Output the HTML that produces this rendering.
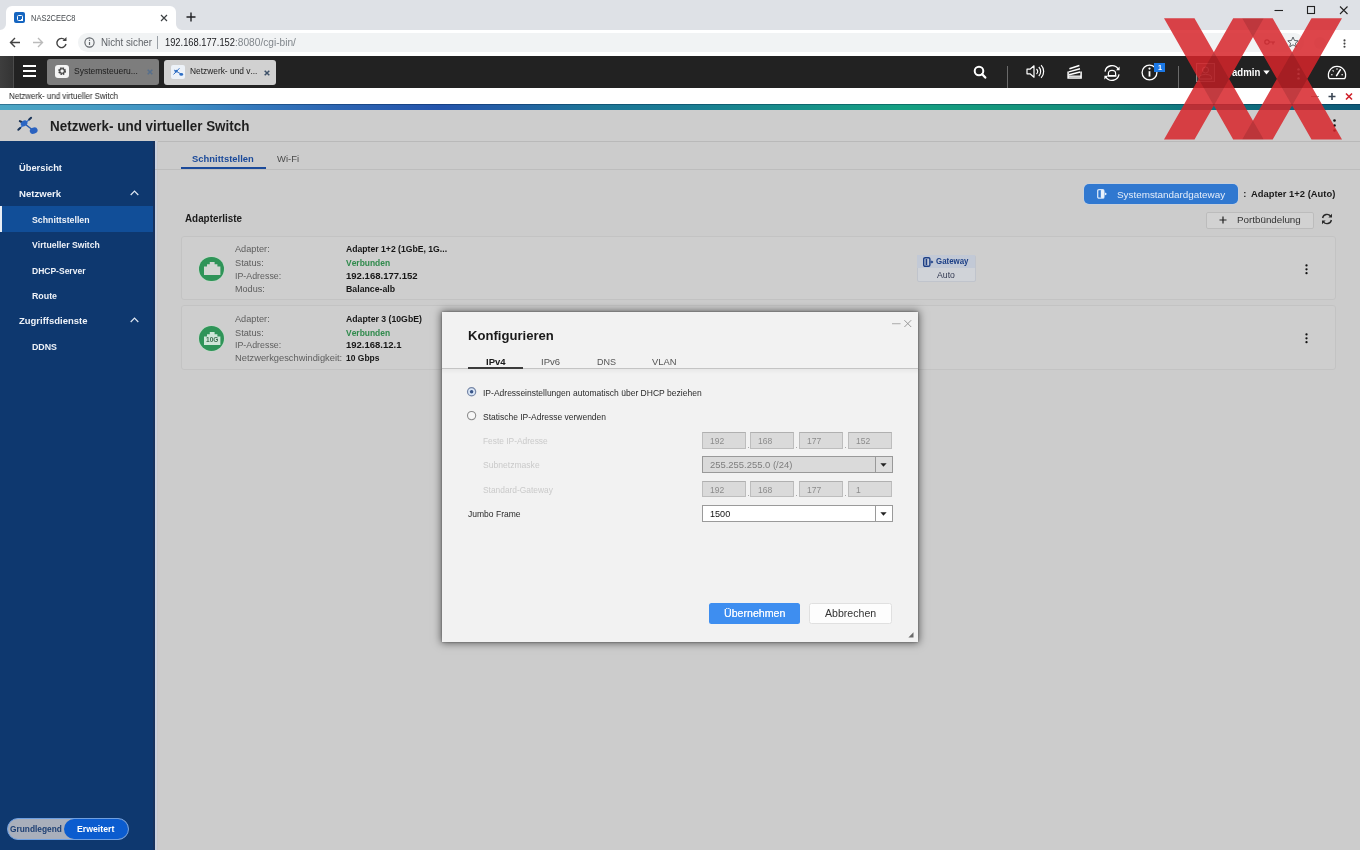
<!DOCTYPE html>
<html lang="de"><head><meta charset="utf-8"><title>NAS2CEEC8</title>
<style>
*{box-sizing:border-box;margin:0;padding:0}
html,body{width:1360px;height:850px;overflow:hidden;background:#cccccc;font-family:"Liberation Sans",sans-serif}
.a{position:absolute}
.t{position:absolute;white-space:nowrap;font-variant-ligatures:none;font-kerning:none;transform-origin:0 50%;line-height:20px;height:20px;font-family:"Liberation Sans",sans-serif}
svg{position:absolute;overflow:visible}
#root{position:absolute;left:0;top:0;width:1360px;height:850px;overflow:hidden;will-change:transform}
</style></head>
<body>
<div id="root">
<div class="a" style="left:0;top:0;width:1360px;height:30px;background:#dee1e6"></div>
<div class="a" style="left:5.5px;top:6px;width:170px;height:25px;background:#fff;border-radius:6px 6px 0 0"></div>
<svg style="left:-0.5px;top:23.5px" width="6" height="6" viewBox="0 0 6 6"><path d="M6 0V6H0A6 6 0 0 0 6 0Z" fill="#fff"/></svg>
<svg style="left:175.5px;top:23.5px" width="6" height="6" viewBox="0 0 6 6"><path d="M0 0V6H6A6 6 0 0 1 0 0Z" fill="#fff"/></svg>
<div class="a" style="left:14px;top:12px;width:11px;height:11px;background:#1565c0;border-radius:2px"></div>
<div class="a" style="left:16.5px;top:14.5px;width:6px;height:6px;border:1.3px solid #fff;border-radius:1.5px"></div>
<div class="a" style="left:21.2px;top:19.2px;width:2.2px;height:2.2px;background:#fff"></div>
<span class="t" style="left:31.20px;top:8.00px;font-size:9.20px;color:#45494d;transform:scaleX(0.815);">NAS2CEEC8</span>
<svg style="left:160px;top:14px" width="8" height="8" viewBox="0 0 8 8"><path d="M1 1L7 7M7 1L1 7" stroke="#3c4043" stroke-width="1.2" fill="none"/></svg>
<svg style="left:186px;top:12px" width="10" height="10" viewBox="0 0 10 10"><path d="M5 0.5V9.5M0.5 5H9.5" stroke="#202124" stroke-width="1.4" fill="none"/></svg>
<svg style="left:1274px;top:5px" width="80" height="12" viewBox="0 0 80 12"><path d="M0.5 5.5H9" stroke="#222" stroke-width="1.1" fill="none"/><rect x="33.5" y="1.5" width="7" height="7" stroke="#222" stroke-width="1.1" fill="none"/><path d="M66 1.5L73.5 9M73.5 1.5L66 9" stroke="#222" stroke-width="1.1" fill="none"/></svg>
<div class="a" style="left:0;top:29.5px;width:1360px;height:26px;background:#fff"></div>
<div class="a" style="left:78px;top:33.3px;width:1226px;height:18.6px;background:#f1f3f4;border-radius:9.3px"></div>
<svg style="left:9px;top:36px" width="60" height="13" viewBox="0 0 60 13"><path d="M11 6.5H1.5M6 2L1.5 6.5L6 11" stroke="#444" stroke-width="1.4" fill="none"/><path d="M24 6.5H33.5M29 2L33.5 6.5L29 11" stroke="#bbb" stroke-width="1.4" fill="none"/><path d="M56 4A4.6 4.6 0 1 0 57 8" stroke="#444" stroke-width="1.4" fill="none"/><path d="M57.5 1V5H53.5Z" fill="#444"/></svg>
<svg style="left:84px;top:37px" width="11" height="11" viewBox="0 0 11 11"><circle cx="5.5" cy="5.5" r="4.6" stroke="#5f6368" stroke-width="1.1" fill="none"/><path d="M5.5 5V8" stroke="#5f6368" stroke-width="1.2"/><circle cx="5.5" cy="3.3" r="0.7" fill="#5f6368"/></svg>
<span class="t" style="left:100.80px;top:32.00px;font-size:10.50px;color:#5f6368;transform:scaleX(0.930);">Nicht sicher</span>
<div class="a" style="left:157px;top:36px;width:1px;height:13px;background:#9aa0a6"></div>
<span class="t" style="left:165.00px;top:33.00px;font-size:10.03px;color:#202124;transform:scaleX(0.930);">192.168.177.152</span>
<span class="t" style="left:235.30px;top:32.00px;font-size:10.92px;color:#80868b;transform:scaleX(0.930);">:8080/cgi-bin/</span>
<svg style="left:1264px;top:37px" width="12" height="10" viewBox="0 0 12 10"><circle cx="3" cy="5" r="2.2" stroke="#5f6368" stroke-width="1.2" fill="none"/><path d="M5 5H11M9 5V7.5" stroke="#5f6368" stroke-width="1.2" fill="none"/></svg>
<svg style="left:1287px;top:36px" width="12" height="12" viewBox="0 0 12 12"><path d="M6 1L7.5 4.5L11.2 4.8L8.4 7.2L9.3 10.8L6 8.8L2.7 10.8L3.6 7.2L0.8 4.8L4.5 4.5Z" stroke="#5f6368" stroke-width="1" fill="none"/></svg>
<div class="a" style="left:1314px;top:36.5px;width:12px;height:12px;border-radius:6px;background:#eceef0"></div>
<svg style="left:1343.3px;top:38.6px" width="3" height="10" viewBox="0 0 3 10"><circle cx="1.5" cy="1.4" r="1.05" fill="#444"/><circle cx="1.5" cy="4.6" r="1.05" fill="#444"/><circle cx="1.5" cy="7.8" r="1.05" fill="#444"/></svg>
<div class="a" style="left:0;top:55.5px;width:1360px;height:32.5px;background:#222222"></div>
<div class="a" style="left:0;top:55.5px;width:13.7px;height:32.5px;background:linear-gradient(90deg,#3e3e3e,#343434);border-right:1px solid #4c4c4c"></div>
<div class="a" style="left:22.5px;top:64.5px;width:13.5px;height:2px;background:#fff"></div>
<div class="a" style="left:22.5px;top:69.5px;width:13.5px;height:2px;background:#fff"></div>
<div class="a" style="left:22.5px;top:74.5px;width:13.5px;height:2px;background:#fff"></div>
<div class="a" style="left:47.3px;top:59.4px;width:112px;height:25.5px;background:#7d7d7d;border-radius:3px"></div>
<div class="a" style="left:55px;top:64.5px;width:13.5px;height:13.5px;background:#f4f4f4;border-radius:3px"></div>
<svg style="left:56.6px;top:66.1px" width="10.2" height="10.2" viewBox="0 0 10 10"><circle cx="5" cy="5" r="3" stroke="#444" stroke-width="1.6" fill="none" stroke-dasharray="1.6 0.75"/><circle cx="5" cy="5" r="2.2" stroke="#444" stroke-width="1" fill="none"/></svg>
<span class="t" style="left:73.70px;top:61.00px;font-size:8.77px;color:#1c1c1c;transform:scaleX(0.970);">Systemsteueru...</span>
<svg style="left:147px;top:69px" width="6" height="6" viewBox="0 0 6 6"><path d="M0.7 0.7L5.3 5.3M5.3 0.7L0.7 5.3" stroke="#566f8c" stroke-width="1.5" fill="none"/></svg>
<div class="a" style="left:164px;top:59.5px;width:111.5px;height:25.5px;background:#d1d1d1;border-radius:3px"></div>
<div class="a" style="left:171px;top:64.5px;width:14px;height:14px;background:#edf2f8;border-radius:2px"></div>
<svg style="left:172px;top:66px" width="12" height="11" viewBox="0 0 12 11"><path d="M1.5 8.5L7.5 2.2M2 4L9 8" stroke="#3a74c6" stroke-width="1" fill="none"/><ellipse cx="4.2" cy="5.2" rx="1.7" ry="1.3" fill="#2f6fc4" transform="rotate(-35 4.2 5.2)"/><ellipse cx="9.3" cy="8.4" rx="1.9" ry="1.4" fill="#2f6fc4"/></svg>
<span class="t" style="left:189.80px;top:61.00px;font-size:8.65px;color:#1c1c1c;transform:scaleX(0.970);">Netzwerk- und v...</span>
<svg style="left:263.5px;top:69.5px" width="6" height="6" viewBox="0 0 6 6"><path d="M0.7 0.7L5.3 5.3M5.3 0.7L0.7 5.3" stroke="#3c5068" stroke-width="1.5" fill="none"/></svg>
<svg style="left:972.5px;top:64.6px" width="14" height="14" viewBox="0 0 14 14"><circle cx="6" cy="6" r="4.3" stroke="#fff" stroke-width="2" fill="none"/><path d="M9.2 9.2L12.3 12.6" stroke="#fff" stroke-width="2.3" stroke-linecap="round"/></svg>
<div class="a" style="left:1007px;top:66px;width:1px;height:23px;background:#6a6a6a"></div>
<svg style="left:1026px;top:64px" width="19" height="15" viewBox="0 0 19 15"><path d="M1 5.2H4L8 1.8V13.2L4 9.8H1Z" stroke="#fff" stroke-width="1.2" fill="none" stroke-linejoin="round"/><path d="M10.5 5A3.6 3.6 0 0 1 10.5 10" stroke="#fff" stroke-width="1.2" fill="none"/><path d="M12.8 3A6.4 6.4 0 0 1 12.8 12" stroke="#fff" stroke-width="1.2" fill="none"/><path d="M15.1 1.2A9 9 0 0 1 15.1 13.8" stroke="#fff" stroke-width="1.2" fill="none"/></svg>
<svg style="left:1066.5px;top:64px" width="15" height="16" viewBox="0 0 15 16"><path d="M2.4 4.8L12.4 1.5M1.8 7.9L13 4.8M2 10.8L13.2 8" stroke="#fff" stroke-width="1.5" fill="none"/><path d="M1.1 7.6V14H14.1V7.6" stroke="#fff" stroke-width="1.5" fill="none"/><path d="M1.1 12.2H14.1" stroke="#fff" stroke-width="1.3"/></svg>
<svg style="left:1102.5px;top:63.5px" width="18" height="18" viewBox="0 0 18 18"><path d="M2 7.6A7.2 7.2 0 0 1 15.2 5" stroke="#fff" stroke-width="1.3" fill="none"/><path d="M16 10.4A7.2 7.2 0 0 1 2.8 13" stroke="#fff" stroke-width="1.3" fill="none"/><path d="M16.6 2.6V6.2H13Z" fill="#fff"/><path d="M1.4 15.4V11.8H5Z" fill="#fff"/><path d="M5.4 11.6V9.4Q5.4 6.4 9 6.4Q12.6 6.4 12.6 9.4V11.6Z" stroke="#fff" stroke-width="1.2" fill="none"/><path d="M4.6 12H13.4" stroke="#fff" stroke-width="1.4"/></svg>
<svg style="left:1141px;top:64px" width="17" height="17" viewBox="0 0 17 17"><circle cx="8.5" cy="8.5" r="7.4" stroke="#fff" stroke-width="1.3" fill="none"/><path d="M8.5 7.2V12.6" stroke="#fff" stroke-width="1.8"/><circle cx="8.5" cy="4.6" r="1.1" fill="#fff"/></svg>
<div class="a" style="left:1154.2px;top:63.2px;width:10.5px;height:9.2px;background:#1b78e6"></div>
<span class="t" style="left:1157.60px;top:58.00px;font-size:7.48px;font-weight:700;color:#fff;transform:scaleX(0.970);">1</span>
<div class="a" style="left:1178px;top:66px;width:1px;height:23px;background:#6a6a6a"></div>
<div class="a" style="left:1196px;top:62.5px;width:19px;height:19px;border:1px solid #8a8a8a;background:#3a3a3a"></div>
<svg style="left:1198px;top:64.5px" width="15" height="15" viewBox="0 0 15 15"><circle cx="7.5" cy="5" r="3" stroke="#aaa" stroke-width="1" fill="none"/><path d="M1.5 14V12.5Q1.5 9.5 7.5 9.5Q13.5 9.5 13.5 12.5V14Z" stroke="#aaa" stroke-width="1" fill="none"/></svg>
<span class="t" style="left:1232.00px;top:62.00px;font-size:11.00px;font-weight:700;color:#fff;transform:scaleX(0.873);">admin</span>
<svg style="left:1263px;top:70px" width="7" height="5" viewBox="0 0 7 5"><path d="M0.3 0.5H6.7L3.5 4.5Z" fill="#fff"/></svg>
<svg style="left:1296.5px;top:67.5px" width="3" height="12" viewBox="0 0 3 12"><circle cx="1.5" cy="1.4" r="1.2" fill="#bbb"/><circle cx="1.5" cy="5.9" r="1.2" fill="#bbb"/><circle cx="1.5" cy="10.4" r="1.2" fill="#bbb"/></svg>
<svg style="left:1327px;top:65px" width="20" height="15" viewBox="0 0 20 15"><path d="M2.2 13.6A8.6 8.6 0 1 1 17.8 13.6Z" stroke="#fff" stroke-width="1.3" fill="none" stroke-linejoin="round"/><path d="M9.6 10.6L13.2 4.8" stroke="#fff" stroke-width="1.6" stroke-linecap="round"/><path d="M4 9.8H5.6M5.6 5.4L6.8 6.4M10 3.2V4.8M14.4 9.8H16" stroke="#fff" stroke-width="1.1"/></svg>
<div class="a" style="left:0;top:88px;width:1360px;height:16px;background:#fff"></div>
<span class="t" style="left:8.60px;top:87.00px;font-size:8.20px;color:#222;transform:scaleX(0.970);">Netzwerk- und virtueller Switch</span>
<svg style="left:1310px;top:92px" width="44" height="9" viewBox="0 0 44 9"><path d="M1 4.5H9" stroke="#999" stroke-width="1" fill="none"/><path d="M22 1V8M18.5 4.5H25.5" stroke="#3a4654" stroke-width="1.6" fill="none"/><path d="M36 1.5L42 7.5M42 1.5L36 7.5" stroke="#d0202a" stroke-width="1.6" fill="none"/></svg>
<div class="a" style="left:0;top:104px;width:1360px;height:6px;background:linear-gradient(90deg,#4ca6c4 0.0%,#489ec4 6.2%,#4092c4 12.5%,#3478bc 18.8%,#2c64b2 25.0%,#2454ac 32.4%,#2460a4 37.5%,#1c7696 43.8%,#1a7c94 50.0%,#188a8c 56.2%,#169886 62.5%,#14a082 66.2%,#14967c 73.5%,#148c7c 80.9%,#107880 86.8%,#0e5a78 100.0%)"></div>
<div class="a" style="left:0;top:104px;width:1360px;height:1px;background:rgba(0,30,60,.35)"></div>
<div class="a" style="left:0;top:110px;width:1360px;height:31px;background:#cdcdcd"></div>
<div class="a" style="left:155px;top:140.5px;width:1205px;height:1px;background:#b9b9b9"></div>
<svg style="left:17px;top:115px" width="22" height="19" viewBox="0 0 22 19"><path d="M1.8 14.3L13.8 3" stroke="#3b78d0" stroke-width="1.3" fill="none"/><path d="M3.2 6.3L7.1 8.4L16.7 15.8" stroke="#2a5cae" stroke-width="1.3" fill="none"/><path d="M1.3 14.8L3.2 13" stroke="#1c3558" stroke-width="2" stroke-linecap="round"/><path d="M12.2 4.5L14.1 2.7" stroke="#1c3558" stroke-width="2" stroke-linecap="round"/><path d="M2.8 6.1L4.6 7" stroke="#1c3558" stroke-width="2" stroke-linecap="round"/><ellipse cx="7.1" cy="8.4" rx="3.5" ry="2.7" fill="#2a66c4" transform="rotate(-35 7.1 8.4)"/><ellipse cx="16.7" cy="15.6" rx="4" ry="3.1" fill="#2a62c0" transform="rotate(-20 16.7 15.6)"/></svg>
<span class="t" style="left:50.00px;top:116.00px;font-size:13.86px;font-weight:700;color:#1f1f1f;transform:scaleX(0.970);">Netzwerk- und virtueller Switch</span>
<svg style="left:1332.5px;top:119px" width="3" height="14" viewBox="0 0 3 14"><circle cx="1.5" cy="1.5" r="1.3" fill="#111"/><circle cx="1.5" cy="6.5" r="1.3" fill="#111"/><circle cx="1.5" cy="11.5" r="1.3" fill="#111"/></svg>
<div class="a" style="left:0;top:140.5px;width:154.7px;height:709.5px;background:#0e386f"></div><div class="a" style="left:153.2px;top:140.5px;width:1.5px;height:709.5px;background:#17325e"></div><div class="a" style="left:154.7px;top:140.5px;width:2.2px;height:709.5px;background:#c9d0dd"></div><div class="a" style="left:156.9px;top:140.5px;width:1px;height:709.5px;background:#c8c8c8"></div>
<div class="a" style="left:0;top:206px;width:153.2px;height:26px;background:#114e98"></div>
<div class="a" style="left:0;top:206px;width:1.6px;height:26px;background:#e8eef6"></div>
<span class="t" style="left:18.50px;top:158.00px;font-size:9.70px;font-weight:700;color:#eef2f8;transform:scaleX(0.961);">Übersicht</span>
<span class="t" style="left:18.50px;top:184.00px;font-size:9.70px;font-weight:700;color:#eef2f8;transform:scaleX(0.989);">Netzwerk</span>
<span class="t" style="left:32.40px;top:210.00px;font-size:9.00px;font-weight:700;color:#eef2f8;transform:scaleX(0.976);">Schnittstellen</span>
<span class="t" style="left:32.40px;top:235.00px;font-size:9.00px;font-weight:700;color:#eef2f8;transform:scaleX(0.961);">Virtueller Switch</span>
<span class="t" style="left:32.40px;top:261.00px;font-size:9.00px;font-weight:700;color:#eef2f8;transform:scaleX(0.946);">DHCP-Server</span>
<span class="t" style="left:32.40px;top:286.00px;font-size:9.00px;font-weight:700;color:#eef2f8;transform:scaleX(0.980);">Route</span>
<span class="t" style="left:18.50px;top:311.00px;font-size:9.70px;font-weight:700;color:#eef2f8;transform:scaleX(0.978);">Zugriffsdienste</span>
<span class="t" style="left:32.40px;top:337.00px;font-size:9.00px;font-weight:700;color:#eef2f8;transform:scaleX(0.980);">DDNS</span>
<svg style="left:130px;top:189.5px" width="9" height="6" viewBox="0 0 9 6"><path d="M0.7 5L4.5 1.2L8.3 5" stroke="#dfe7f2" stroke-width="1.2" fill="none"/></svg>
<svg style="left:130px;top:317px" width="9" height="6" viewBox="0 0 9 6"><path d="M0.7 5L4.5 1.2L8.3 5" stroke="#dfe7f2" stroke-width="1.2" fill="none"/></svg>
<div class="a" style="left:7px;top:818px;width:122px;height:21.5px;border-radius:11px;background:#a9afbb;border:1px solid #6f9fe0"></div>
<div class="a" style="left:63.5px;top:819px;width:64.5px;height:19.5px;border-radius:10px;background:#0b5ccf"></div>
<span class="t" style="left:10.00px;top:819.00px;font-size:8.61px;font-weight:700;color:#1d3f73;transform:scaleX(0.970);">Grundlegend</span>
<span class="t" style="left:77.00px;top:819.00px;font-size:8.99px;font-weight:700;color:#ffffff;transform:scaleX(0.970);">Erweitert</span>
<span class="t" style="left:192.20px;top:149.00px;font-size:9.72px;font-weight:700;color:#1b4a9a;transform:scaleX(0.970);">Schnittstellen</span>
<span class="t" style="left:277.00px;top:149.00px;font-size:9.72px;color:#4a4a4a;transform:scaleX(0.970);">Wi-Fi</span>
<div class="a" style="left:155px;top:169px;width:1205px;height:1px;background:#bdbdbd"></div>
<div class="a" style="left:181px;top:167px;width:84.5px;height:2.4px;background:#1b4a9a"></div>
<div class="a" style="left:1084.4px;top:183.9px;width:153.7px;height:20px;background:#3078d0;border-radius:5px;box-shadow:0 0 0 0.6px rgba(190,212,242,.8)"></div>
<svg style="left:1096.8px;top:189.4px" width="10" height="10" viewBox="0 0 10 10"><rect x="0.7" y="0.7" width="6.2" height="8.4" rx="1.2" stroke="#d6e5f8" stroke-width="1.3" fill="none"/><rect x="3.8" y="0.9" width="3.2" height="8" rx="0.8" fill="#eaf2fc"/><path d="M7.8 3.3L10 4.9L7.8 6.5Z" fill="#eaf2fc"/></svg>
<span class="t" style="left:1116.60px;top:185.00px;font-size:9.50px;color:#e6eefa;transform:scaleX(1.039);">Systemstandardgateway</span>
<span class="t" style="left:1243.30px;top:184.00px;font-size:9.30px;font-weight:700;color:#222;">:</span>
<span class="t" style="left:1250.90px;top:184.00px;font-size:9.70px;font-weight:700;color:#1a1a1a;transform:scaleX(0.970);">Adapter 1+2 (Auto)</span>
<div class="a" style="left:1206px;top:211.5px;width:108px;height:17.5px;background:#d2d2d2;border:1px solid #bcbcbc;border-radius:2px"></div>
<svg style="left:1218.5px;top:215.9px" width="8" height="8" viewBox="0 0 8 8"><path d="M4 0.5V7.5M0.5 4H7.5" stroke="#222" stroke-width="1.2" fill="none"/></svg>
<span class="t" style="left:1236.50px;top:210.00px;font-size:9.50px;color:#333;transform:scaleX(1.032);">Portbündelung</span>
<svg style="left:1321px;top:213px" width="12" height="12" viewBox="0 0 12 12"><path d="M1.6 5A4.5 4.5 0 0 1 9.6 3.2" stroke="#2a2a2a" stroke-width="1.4" fill="none"/><path d="M10.4 7A4.5 4.5 0 0 1 2.4 8.8" stroke="#2a2a2a" stroke-width="1.4" fill="none"/><path d="M11 0.8V4.4H7.4Z" fill="#2a2a2a"/><path d="M1 11.2V7.6H4.6Z" fill="#2a2a2a"/></svg>
<span class="t" style="left:185.00px;top:209.00px;font-size:10.17px;font-weight:700;color:#1c1c1c;transform:scaleX(0.970);">Adapterliste</span>
<div class="a" style="left:181px;top:235.8px;width:1154.5px;height:64.6px;background:#cecece;border:1px solid #c3c3c3;border-radius:3px"></div>
<div class="a" style="left:181px;top:305.2px;width:1154.5px;height:64.6px;background:#cecece;border:1px solid #c3c3c3;border-radius:3px"></div>
<div class="a" style="left:199.3px;top:256.5px;width:24.8px;height:24.8px;border-radius:12.4px;background:#2f9458;box-shadow:0 0 0 0.7px rgba(190,225,200,.7)"></div>
<svg style="left:203.5px;top:262.2px" width="16.4" height="13" viewBox="0 0 16.4 13"><path d="M0 13V4.4H3V2.2H5.8V0H10.6V2.2H13.4V4.4H16.4V13Z" fill="#d2d6d2"/></svg>
<div class="a" style="left:199.3px;top:326.2px;width:24.8px;height:24.8px;border-radius:12.4px;background:#2f9458;box-shadow:0 0 0 0.7px rgba(190,225,200,.7)"></div>
<svg style="left:203.5px;top:331.9px" width="16.4" height="13" viewBox="0 0 16.4 13"><path d="M0 13V4.4H3V2.2H5.8V0H10.6V2.2H13.4V4.4H16.4V13Z" fill="#cfe6d8"/></svg>
<span class="t" style="left:205.50px;top:330.00px;font-size:6.40px;font-weight:700;color:#3d6e50;transform:scaleX(1.025);">10G</span>
<span class="t" style="left:234.80px;top:239.00px;font-size:9.40px;color:#5e5e5e;transform:scaleX(0.979);">Adapter:</span>
<span class="t" style="left:234.80px;top:253.00px;font-size:9.40px;color:#5e5e5e;transform:scaleX(0.984);">Status:</span>
<span class="t" style="left:234.80px;top:266.00px;font-size:9.40px;color:#5e5e5e;transform:scaleX(0.943);">IP-Adresse:</span>
<span class="t" style="left:234.80px;top:279.00px;font-size:9.40px;color:#5e5e5e;transform:scaleX(0.967);">Modus:</span>
<span class="t" style="left:345.80px;top:239.00px;font-size:9.20px;font-weight:700;color:#161616;transform:scaleX(0.940);">Adapter 1+2 (1GbE, 1G...</span>
<span class="t" style="left:345.80px;top:253.00px;font-size:9.20px;font-weight:700;color:#2f8a4c;transform:scaleX(0.920);">Verbunden</span>
<span class="t" style="left:345.80px;top:266.00px;font-size:9.20px;font-weight:700;color:#161616;transform:scaleX(1.039);">192.168.177.152</span>
<span class="t" style="left:345.80px;top:279.00px;font-size:9.20px;font-weight:700;color:#161616;transform:scaleX(0.953);">Balance-alb</span>
<span class="t" style="left:234.80px;top:309.00px;font-size:9.40px;color:#5e5e5e;transform:scaleX(0.979);">Adapter:</span>
<span class="t" style="left:234.80px;top:323.00px;font-size:9.40px;color:#5e5e5e;transform:scaleX(0.984);">Status:</span>
<span class="t" style="left:234.80px;top:335.00px;font-size:9.40px;color:#5e5e5e;transform:scaleX(0.943);">IP-Adresse:</span>
<span class="t" style="left:234.80px;top:348.00px;font-size:9.40px;color:#5e5e5e;transform:scaleX(0.994);">Netzwerkgeschwindigkeit:</span>
<span class="t" style="left:345.80px;top:309.00px;font-size:9.20px;font-weight:700;color:#161616;transform:scaleX(0.947);">Adapter 3 (10GbE)</span>
<span class="t" style="left:345.80px;top:323.00px;font-size:9.20px;font-weight:700;color:#2f8a4c;transform:scaleX(0.920);">Verbunden</span>
<span class="t" style="left:345.80px;top:335.00px;font-size:9.20px;font-weight:700;color:#161616;transform:scaleX(1.033);">192.168.12.1</span>
<span class="t" style="left:345.80px;top:348.00px;font-size:9.20px;font-weight:700;color:#161616;transform:scaleX(0.923);">10 Gbps</span>
<div class="a" style="left:916.5px;top:254.5px;width:59px;height:27.5px;background:#d0d3d8;border:1px solid #c0c4cc;border-radius:2px"></div>
<div class="a" style="left:917px;top:255px;width:58px;height:13px;background:#c2c9d6"></div>
<svg style="left:922.8px;top:256.8px" width="10.5" height="10" viewBox="0 0 10.5 10"><rect x="0.7" y="0.7" width="6.2" height="8.6" rx="1.4" stroke="#1c3f86" stroke-width="1.4" fill="none"/><rect x="2.6" y="2" width="1.6" height="6" fill="#1c3f86"/><path d="M7.6 4.2H8.6V3.2L10.4 5L8.6 6.8V5.8H7.6Z" fill="#1c3f86"/></svg>
<span class="t" style="left:935.90px;top:252.00px;font-size:8.14px;font-weight:700;color:#1c3f86;transform:scaleX(0.970);">Gateway</span>
<span class="t" style="left:937.10px;top:265.00px;font-size:8.97px;color:#333a52;transform:scaleX(0.970);">Auto</span>
<svg style="left:1304.5px;top:263.5px" width="3" height="11" viewBox="0 0 3 11"><circle cx="1.5" cy="1.4" r="1.15" fill="#111"/><circle cx="1.5" cy="5.3" r="1.15" fill="#111"/><circle cx="1.5" cy="9.2" r="1.15" fill="#111"/></svg>
<svg style="left:1304.5px;top:333.0px" width="3" height="11" viewBox="0 0 3 11"><circle cx="1.5" cy="1.4" r="1.15" fill="#111"/><circle cx="1.5" cy="5.3" r="1.15" fill="#111"/><circle cx="1.5" cy="9.2" r="1.15" fill="#111"/></svg>
<div class="a" style="left:442px;top:312px;width:475.7px;height:329.8px;background:#f2f2f2;box-shadow:0 0 8px 1px rgba(0,0,0,.55),0 0 2px rgba(0,0,0,.4)"></div>
<span class="t" style="left:467.80px;top:326.00px;font-size:13.51px;font-weight:700;color:#1a1a1a;transform:scaleX(0.970);">Konfigurieren</span>
<svg style="left:891.7px;top:320px" width="20" height="8" viewBox="0 0 20 8"><path d="M0 3.7H8.6" stroke="#b2b2b2" stroke-width="1.1" fill="none"/><path d="M12.4 0.2L19.2 7M19.2 0.2L12.4 7" stroke="#8e8e8e" stroke-width="0.9" fill="none"/></svg>
<div class="a" style="left:442px;top:368.3px;width:475.5px;height:1px;background:#c4c4c4"></div>
<div class="a" style="left:442px;top:369.3px;width:475.5px;height:5px;background:linear-gradient(180deg,#e8e8e8,#f2f2f2)"></div>
<div class="a" style="left:467.6px;top:366.9px;width:55.8px;height:2.1px;background:#3c3c3c"></div>
<span class="t" style="left:485.70px;top:352.00px;font-size:9.60px;font-weight:700;color:#1a1a1a;transform:scaleX(0.992);">IPv4</span>
<span class="t" style="left:540.90px;top:352.00px;font-size:9.60px;color:#555;transform:scaleX(0.994);">IPv6</span>
<span class="t" style="left:596.50px;top:352.00px;font-size:9.60px;color:#555;transform:scaleX(0.942);">DNS</span>
<span class="t" style="left:651.70px;top:352.00px;font-size:9.60px;color:#555;transform:scaleX(0.977);">VLAN</span>
<svg style="left:466px;top:385.5px" width="11" height="11" viewBox="0 0 11 11"><circle cx="5.6" cy="5.7" r="4.1" fill="#d9e6f7" stroke="#7787a6" stroke-width="1.2"/><circle cx="5.6" cy="5.7" r="1.75" fill="#3a5689"/></svg>
<svg style="left:466px;top:409.8px" width="11" height="11" viewBox="0 0 11 11"><circle cx="5.6" cy="5.6" r="4.1" fill="#f7f7f7" stroke="#8c8c8c" stroke-width="1.1"/></svg>
<span class="t" style="left:483.30px;top:383.00px;font-size:8.75px;color:#2a2a2a;transform:scaleX(0.973);">IP-Adresseinstellungen automatisch über DHCP beziehen</span>
<span class="t" style="left:483.30px;top:407.00px;font-size:8.75px;color:#2a2a2a;transform:scaleX(0.969);">Statische IP-Adresse verwenden</span>
<span class="t" style="left:483.30px;top:431.00px;font-size:8.75px;color:#cacaca;transform:scaleX(0.957);">Feste IP-Adresse</span>
<span class="t" style="left:483.30px;top:455.00px;font-size:8.75px;color:#cacaca;transform:scaleX(0.979);">Subnetzmaske</span>
<span class="t" style="left:483.30px;top:480.00px;font-size:8.75px;color:#cacaca;transform:scaleX(0.957);">Standard-Gateway</span>
<span class="t" style="left:467.60px;top:504.00px;font-size:8.75px;color:#2a2a2a;transform:scaleX(0.974);">Jumbo Frame</span>
<div class="a" style="left:702.0px;top:432.3px;width:43.6px;height:16.4px;background:#dadada;border:1px solid #bdbdbd;border-top-color:#b0b0b0"></div>
<span class="t" style="left:709.80px;top:431.00px;font-size:9.00px;color:#8c8c8c;transform:scaleX(0.950);">192</span>
<div class="a" style="left:750.3px;top:432.3px;width:43.6px;height:16.4px;background:#dadada;border:1px solid #bdbdbd;border-top-color:#b0b0b0"></div>
<span class="t" style="left:758.10px;top:431.00px;font-size:9.00px;color:#8c8c8c;transform:scaleX(0.950);">168</span>
<div class="a" style="left:799.0px;top:432.3px;width:43.6px;height:16.4px;background:#dadada;border:1px solid #bdbdbd;border-top-color:#b0b0b0"></div>
<span class="t" style="left:806.80px;top:431.00px;font-size:9.00px;color:#8c8c8c;transform:scaleX(0.950);">177</span>
<div class="a" style="left:848.3px;top:432.3px;width:43.6px;height:16.4px;background:#dadada;border:1px solid #bdbdbd;border-top-color:#b0b0b0"></div>
<span class="t" style="left:856.10px;top:431.00px;font-size:9.00px;color:#8c8c8c;transform:scaleX(0.950);">152</span>
<div class="a" style="left:747.6px;top:446.5px;width:1.2px;height:1.2px;background:#aaa"></div>
<div class="a" style="left:795.9px;top:446.5px;width:1.2px;height:1.2px;background:#aaa"></div>
<div class="a" style="left:844.6px;top:446.5px;width:1.2px;height:1.2px;background:#aaa"></div>
<div class="a" style="left:702.0px;top:481.0px;width:43.6px;height:16.4px;background:#dadada;border:1px solid #bdbdbd;border-top-color:#b0b0b0"></div>
<span class="t" style="left:709.80px;top:480.00px;font-size:9.00px;color:#8c8c8c;transform:scaleX(0.950);">192</span>
<div class="a" style="left:750.3px;top:481.0px;width:43.6px;height:16.4px;background:#dadada;border:1px solid #bdbdbd;border-top-color:#b0b0b0"></div>
<span class="t" style="left:758.10px;top:480.00px;font-size:9.00px;color:#8c8c8c;transform:scaleX(0.950);">168</span>
<div class="a" style="left:799.0px;top:481.0px;width:43.6px;height:16.4px;background:#dadada;border:1px solid #bdbdbd;border-top-color:#b0b0b0"></div>
<span class="t" style="left:806.80px;top:480.00px;font-size:9.00px;color:#8c8c8c;transform:scaleX(0.950);">177</span>
<div class="a" style="left:848.3px;top:481.0px;width:43.6px;height:16.4px;background:#dadada;border:1px solid #bdbdbd;border-top-color:#b0b0b0"></div>
<span class="t" style="left:856.10px;top:480.00px;font-size:9.00px;color:#8c8c8c;transform:scaleX(0.950);">1</span>
<div class="a" style="left:747.6px;top:495.2px;width:1.2px;height:1.2px;background:#aaa"></div>
<div class="a" style="left:795.9px;top:495.2px;width:1.2px;height:1.2px;background:#aaa"></div>
<div class="a" style="left:844.6px;top:495.2px;width:1.2px;height:1.2px;background:#aaa"></div>
<div class="a" style="left:702px;top:456px;width:190.5px;height:17px;background:#dadada;border:1px solid #999"></div>
<div class="a" style="left:874.5px;top:456px;width:18px;height:17px;background:#dddddd;border:1px solid #999"></div>
<svg style="left:880px;top:463px" width="7" height="4" viewBox="0 0 7 4"><path d="M0.4 0.2H6.6L3.5 3.8Z" fill="#222"/></svg>
<span class="t" style="left:710.00px;top:455.00px;font-size:9.00px;color:#7d7d7d;transform:scaleX(1.048);">255.255.255.0 (/24)</span>
<div class="a" style="left:702px;top:505px;width:190.5px;height:17px;background:#fff;border:1px solid #9a9a9a"></div>
<div class="a" style="left:874.5px;top:505px;width:18px;height:17px;background:#fff;border:1px solid #9a9a9a"></div>
<svg style="left:880px;top:512px" width="7" height="4" viewBox="0 0 7 4"><path d="M0.4 0.2H6.6L3.5 3.8Z" fill="#222"/></svg>
<span class="t" style="left:710.00px;top:504.00px;font-size:9.00px;color:#111;transform:scaleX(1.009);">1500</span>
<div class="a" style="left:708.5px;top:603.2px;width:91.8px;height:20.8px;background:#3e8ef0;border-radius:2.5px"></div>
<span class="t" style="left:723.90px;top:604.00px;font-size:10.30px;color:#f4f8ff;transform:scaleX(1.031);text-shadow:0 0 0.4px #fff;">Übernehmen</span>
<div class="a" style="left:808.5px;top:603.2px;width:83.8px;height:20.8px;background:#fdfdfd;border:1px solid #e0e0e0;border-radius:2.5px"></div>
<span class="t" style="left:825.00px;top:604.00px;font-size:10.30px;color:#333;transform:scaleX(1.028);">Abbrechen</span>
<svg style="left:908.3px;top:632.2px" width="6" height="6" viewBox="0 0 6 6"><path d="M5.5 0.3V5.4H0.4Z" fill="#6a6a6a"/></svg>
<svg style="left:0;top:0" width="1360" height="160" viewBox="0 0 1360 160"><defs><clipPath id="wc0"><path d="M1164.0 18.2H1194.5L1263.7 139.4H1233.2Z"/></clipPath><clipPath id="wc1"><path d="M1233.2 18.2H1263.7L1194.5 139.4H1164.0Z"/></clipPath><clipPath id="wc2"><path d="M1242.2 18.2H1272.7L1342.0 139.4H1311.5Z"/></clipPath><clipPath id="wc3"><path d="M1311.5 18.2H1342.0L1272.7 139.4H1242.2Z"/></clipPath></defs><path d="M1164.0 18.2H1194.5L1263.7 139.4H1233.2ZM1233.2 18.2H1263.7L1194.5 139.4H1164.0ZM1242.2 18.2H1272.7L1342.0 139.4H1311.5ZM1311.5 18.2H1342.0L1272.7 139.4H1242.2Z" fill="rgba(215,36,42,.85)" fill-rule="nonzero"/><path d="M1164.0 18.2H1194.5L1263.7 139.4H1233.2Z" clip-path="url(#wc1)" fill="rgba(30,0,5,.14)"/><path d="M1164.0 18.2H1194.5L1263.7 139.4H1233.2Z" clip-path="url(#wc2)" fill="rgba(30,0,5,.14)"/><path d="M1164.0 18.2H1194.5L1263.7 139.4H1233.2Z" clip-path="url(#wc3)" fill="rgba(30,0,5,.14)"/><path d="M1233.2 18.2H1263.7L1194.5 139.4H1164.0Z" clip-path="url(#wc2)" fill="rgba(30,0,5,.14)"/><path d="M1233.2 18.2H1263.7L1194.5 139.4H1164.0Z" clip-path="url(#wc3)" fill="rgba(30,0,5,.14)"/><path d="M1242.2 18.2H1272.7L1342.0 139.4H1311.5Z" clip-path="url(#wc3)" fill="rgba(30,0,5,.14)"/></svg>
</div>
</body></html>
